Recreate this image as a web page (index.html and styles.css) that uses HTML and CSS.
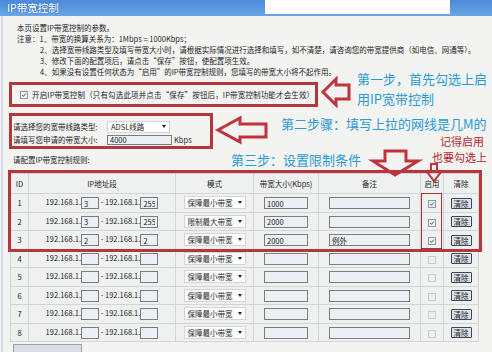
FILE: index.html
```html
<!DOCTYPE html>
<html>
  <head>
    <meta charset="UTF-8" />
    <link rel="stylesheet" href="styles.css">
  </head>
  <body>
    <div class="titlebar">
      <span class="title">IP带宽控制</span>
      <span class="titlebox"></span>
    </div>
    <div class="page">
      <div class="notes">
        <div>本页设置IP带宽控制的参数。</div>
        <div>注意：1、带宽的换算关系为：1Mbps = 1000Kbps；</div>
        <div class="indent">2、选择宽带线路类型及填写带宽大小时，请根据实际情况进行选择和填写，如不清楚，请咨询您的带宽提供商（如电信、网通等）。</div>
        <div class="indent">3、修改下面的配置项后，请点击“保存”按钮，使配置项生效。</div>
        <div class="indent">4、如果没有设置任何状态为“启用”的IP带宽控制规则，您填写的带宽大小将不起作用。</div>
      </div>

      <div class="mark box1">
        <span class="cb on"><svg viewBox="0 0 8 8"><path d="M1.5 4 L3.2 5.8 L6.5 2" /></svg></span>
        <span class="enable-text">开启IP带宽控制（只有勾选此项并点击“保存”按钮后，IP带宽控制功能才会生效）</span>
      </div>

      <div class="mark box2">
        <div class="field">
          <span class="label">请选择您的宽带线路类型:</span>
          <span class="sel line">ADSL线路<i></i></span>
        </div>
        <div class="field">
          <span class="label">请填写您申请的带宽大小:</span>
          <input class="total" value="4000">
          <span class="unit">Kbps</span>
        </div>
      </div>

      <div class="caption">请配置IP带宽控制规则:</div>

      <div class="rules">
        <table>
          <colgroup>
            <col style="width:18px"><col style="width:147px"><col style="width:78px"><col style="width:65px">
            <col style="width:102px"><col style="width:23px"><col style="width:35px">
          </colgroup>
          <thead>
            <tr><th>ID</th><th>IP地址段</th><th>模式</th><th>带宽大小(Kbps)</th><th>备注</th><th>启用</th><th>清除</th></tr>
          </thead>
          <tbody>
            <tr>
              <td>1</td>
              <td>192.168.1.<input class="oct" value="3"> - 192.168.1.<input class="oct" value="255"></td>
              <td><span class="sel mode">保障最小带宽<i></i></span></td>
              <td><input class="bw" value="1000"></td>
              <td><input class="memo" value=""></td>
              <td><span class="cb on"><svg viewBox="0 0 8 8"><path d="M1.5 4 L3.2 5.8 L6.5 2" /></svg></span></td>
              <td><button class="clr">清除</button></td>
            </tr>
            <tr>
              <td>2</td>
              <td>192.168.1.<input class="oct" value="3"> - 192.168.1.<input class="oct" value="255"></td>
              <td><span class="sel mode">限制最大带宽<i></i></span></td>
              <td><input class="bw" value="2000"></td>
              <td><input class="memo" value=""></td>
              <td><span class="cb on"><svg viewBox="0 0 8 8"><path d="M1.5 4 L3.2 5.8 L6.5 2" /></svg></span></td>
              <td><button class="clr">清除</button></td>
            </tr>
            <tr>
              <td>3</td>
              <td>192.168.1.<input class="oct" value="2"> - 192.168.1.<input class="oct" value="2"></td>
              <td><span class="sel mode">保障最小带宽<i></i></span></td>
              <td><input class="bw" value="2000"></td>
              <td><input class="memo" value="例外"></td>
              <td><span class="cb on"><svg viewBox="0 0 8 8"><path d="M1.5 4 L3.2 5.8 L6.5 2" /></svg></span></td>
              <td><button class="clr">清除</button></td>
            </tr>
            <tr>
              <td>4</td>
              <td>192.168.1.<input class="oct" value=""> - 192.168.1.<input class="oct" value=""></td>
              <td><span class="sel mode">保障最小带宽<i></i></span></td>
              <td><input class="bw" value=""></td>
              <td><input class="memo" value=""></td>
              <td><span class="cb"></span></td>
              <td><button class="clr">清除</button></td>
            </tr>
            <tr>
              <td>5</td>
              <td>192.168.1.<input class="oct" value=""> - 192.168.1.<input class="oct" value=""></td>
              <td><span class="sel mode">保障最小带宽<i></i></span></td>
              <td><input class="bw" value=""></td>
              <td><input class="memo" value=""></td>
              <td><span class="cb"></span></td>
              <td><button class="clr">清除</button></td>
            </tr>
            <tr>
              <td>6</td>
              <td>192.168.1.<input class="oct" value=""> - 192.168.1.<input class="oct" value=""></td>
              <td><span class="sel mode">保障最小带宽<i></i></span></td>
              <td><input class="bw" value=""></td>
              <td><input class="memo" value=""></td>
              <td><span class="cb"></span></td>
              <td><button class="clr">清除</button></td>
            </tr>
            <tr>
              <td>7</td>
              <td>192.168.1.<input class="oct" value=""> - 192.168.1.<input class="oct" value=""></td>
              <td><span class="sel mode">保障最小带宽<i></i></span></td>
              <td><input class="bw" value=""></td>
              <td><input class="memo" value=""></td>
              <td><span class="cb"></span></td>
              <td><button class="clr">清除</button></td>
            </tr>
            <tr>
              <td>8</td>
              <td>192.168.1.<input class="oct" value=""> - 192.168.1.<input class="oct" value=""></td>
              <td><span class="sel mode">保障最小带宽<i></i></span></td>
              <td><input class="bw" value=""></td>
              <td><input class="memo" value=""></td>
              <td><span class="cb"></span></td>
              <td><button class="clr">清除</button></td>
            </tr>
          </tbody>
        </table>
        <div class="frame"></div>
        <div class="frame-enable"></div>
      </div>

      <div class="actions"><span class="btn"></span></div>
    </div>

    <!-- hand drawn hints over the screenshot -->
    <div class="hints">
      <svg class="arrows" width="492" height="352" viewBox="0 0 492 352">
        <polygon points="323,92 336,79 336,85 349,85 349,99 336,99 336,105" />
        <polygon points="218,130 240,118 240,124 266,124 266,137 240,137 240,142" />
        <polygon points="385,151 406,151 406,161 418,161 395,175 373,161 385,161" />
        <polygon class="thin" points="431,164 437,164 437,172 441,172 434,181 427,172 431,172" />
      </svg>
      <div class="step s1">第一步，首先勾选上启<br>用IP宽带控制</div>
      <div class="step s2">第二步骤：填写上拉的网线是几M的</div>
      <div class="step s3">第三步：设置限制条件</div>
      <div class="remind r1">记得启用</div>
      <div class="remind r2">也要勾选上</div>
    </div>
  </body>
</html>
```

FILE: styles.css
```css
body {
  margin: 0;
  width: 492px;
  height: 352px;
  overflow: hidden;
  position: relative;
  background: #f3f3f2;
  font-family: "Noto Sans CJK SC", "Liberation Sans", sans-serif;
  font-size: 7.5px;
  color: #1e1e1e;
}
.titlebar {
  height: 16px;
  display: flex;
  align-items: flex-start;
  background: linear-gradient(#4a8ad9, #6aa5e6);
}
.title {
  width: 258px;
  padding-left: 7px;
  color: #fff;
  font-size: 10.5px;
  line-height: 15px;
  text-shadow: 0 0 2px #2b62ad;
}
.titlebox {
  width: 185px;
  height: 14px;
  background: #fff;
}
.page {
  height: 336px;
  margin-left: 1px;
  border-left: 2px solid #d3dbe4;
  box-sizing: border-box;
}
.notes {
  padding: 6px 0 0 14px;
  line-height: 11px;
  white-space: nowrap;
}
.indent {
  padding-left: 23px;
}
.mark {
  border: 3px solid #b6363d;
  box-sizing: border-box;
}
.box1 {
  width: 309px;
  height: 25px;
  margin: 5px 0 0 6px;
  padding-left: 8px;
  display: flex;
  align-items: center;
  gap: 4px;
  white-space: nowrap;
}
.enable-text {
  letter-spacing: 0.15px;
}
.box2 {
  width: 204px;
  height: 36px;
  margin: 6px 0 0 6px;
  padding: 4px 0 0 1px;
}
.field {
  height: 13px;
  display: flex;
  align-items: center;
}
.label {
  width: 94px;
}
.caption {
  margin: 5px 0 0 10px;
  line-height: 11px;
}
.sel {
  display: inline-flex;
  align-items: center;
  justify-content: space-between;
  box-sizing: border-box;
  background: #fff;
  border: 1px solid #d4d4d4;
  padding: 0 3px;
}
.sel i {
  width: 0;
  height: 0;
  border-left: 2.5px solid transparent;
  border-right: 2.5px solid transparent;
  border-top: 3px solid #222;
}
.line {
  width: 63px;
  height: 12px;
}
.mode {
  width: 62px;
  height: 13px;
}
input {
  font-family: inherit;
  font-size: 7.5px;
  color: #222;
  height: 12px;
  padding: 0 2px;
  margin: 0;
  box-sizing: border-box;
  border: 1px solid #7d7d7d;
  background: #ebf0f5;
  vertical-align: middle;
}
.total {
  width: 65px;
  height: 10px;
}
.unit {
  margin-left: 2px;
}
.rules {
  position: relative;
  width: 468px;
  margin: 8px 0 0 7px;
}
table {
  width: 468px;
  table-layout: fixed;
  border-collapse: collapse;
}
th, td {
  padding: 0;
  text-align: center;
  border: 1px solid #d2d5d8;
  background: #eff0f0;
  white-space: nowrap;
  font-weight: normal;
}
thead tr {
  height: 20px;
}
tbody tr {
  height: 18.5px;
}
.oct {
  width: 18px;
}
.bw {
  width: 44px;
}
.memo {
  width: 81px;
}
.cb {
  display: inline-block;
  width: 8px;
  height: 8px;
  box-sizing: border-box;
  border: 1px solid #c9cdd1;
  background: #eceeef;
  vertical-align: middle;
}
.cb.on {
  border-color: #8f9aa5;
  background: #eef2f6;
}
.cb svg {
  display: block;
  width: 6px;
  height: 6px;
}
.cb path {
  fill: none;
  stroke: #46525e;
  stroke-width: 1.3;
}
.clr {
  font-family: inherit;
  font-size: 7.5px;
  line-height: 9px;
  height: 11px;
  padding: 0 2px;
  color: #1d1d1d;
  background: #dce4ee;
  border: 1px solid #3f4953;
  border-radius: 1px;
  vertical-align: middle;
}
.frame {
  position: absolute;
  left: -2px;
  top: -3px;
  width: 474px;
  height: 82px;
  box-sizing: border-box;
  border: 3px solid #b6363d;
}
.frame-enable {
  position: absolute;
  left: 411px;
  top: 20px;
  width: 21px;
  height: 56px;
  box-sizing: border-box;
  border: 1.5px solid #a5343a;
}
.actions {
  margin: 2px 0 0 10px;
}
.btn {
  display: block;
  width: 69px;
  height: 12px;
  box-sizing: border-box;
  background: #d9dee4;
  border: 1px solid #9ba3ab;
}
.hints {
  position: absolute;
  left: 0;
  top: 0;
  width: 492px;
  height: 352px;
  pointer-events: none;
}
.arrows {
  position: absolute;
  left: 0;
  top: 0;
}
.arrows polygon {
  fill: none;
  stroke: #bf343c;
  stroke-width: 3;
  stroke-linejoin: miter;
}
.arrows .thin {
  stroke-width: 2;
}
.step {
  position: absolute;
  color: #2a9ad5;
  font-size: 13px;
  line-height: 20px;
  white-space: nowrap;
}
.s1 { left: 357px; top: 69px; }
.s2 { left: 281px; top: 117px; line-height: 14px; }
.s3 { left: 231px; top: 150px; }
.remind {
  position: absolute;
  color: #b3262d;
  font-size: 11px;
  line-height: 12px;
  white-space: nowrap;
}
.r1 { left: 440px; top: 135px; }
.r2 { left: 432px; top: 151px; }
```
